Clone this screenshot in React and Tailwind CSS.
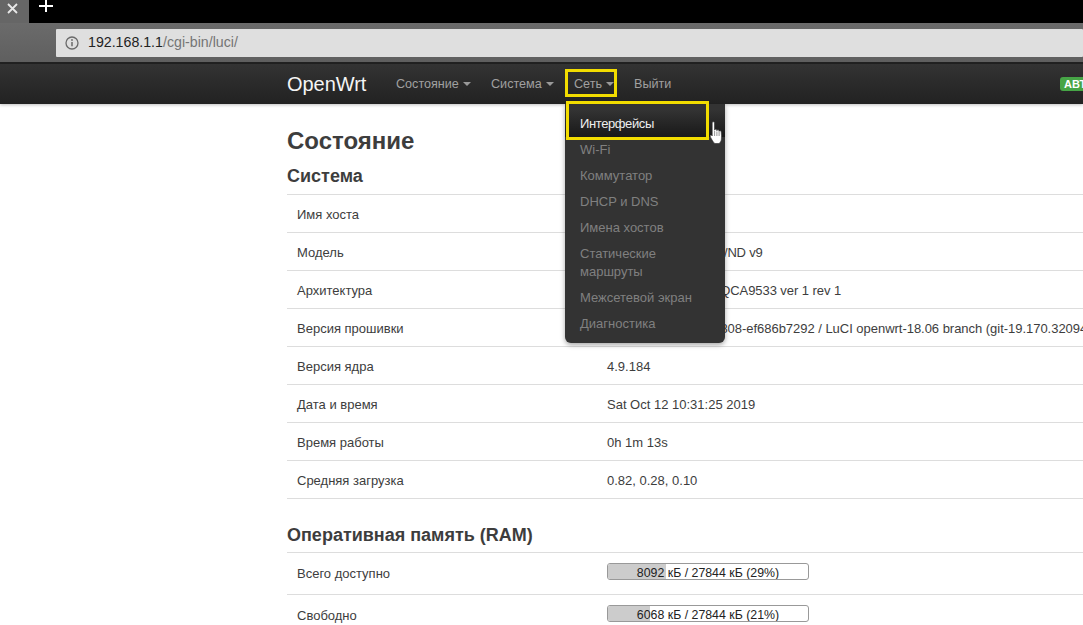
import React from 'react';

const rows = [
    ['Имя хоста', 'OpenWrt'],
    ['Модель', 'TP-Link TL-WR841N/ND v9', 'tracking-[-0.2px]'],
    ['Архитектура', 'Qualcomm Atheros QCA9533 ver 1 rev 1', 'tracking-[-0.06px]'],
    ['Версия прошивки', 'OpenWrt 18.06.4 r7808-ef686b7292 / LuCI openwrt-18.06 branch (git-19.170.32094-4d6d8bc)', 'tracking-[-0.03px]'],
    ['Версия ядра', '4.9.184'],
    ['Дата и время', 'Sat Oct 12 10:31:25 2019'],
    ['Время работы', '0h 1m 13s'],
    ['Средняя загрузка', '0.82, 0.28, 0.10'],
];

const memory = [
    ['Всего доступно', '8092 кБ / 27844 кБ (29%)', 29],
    ['Свободно', '6068 кБ / 27844 кБ (21%)', 21],
];

const menu = ['Wi-Fi', 'Коммутатор', 'DHCP и DNS', 'Имена хостов', 'Статические маршруты', 'Межсетевой экран', 'Диагностика'];

function Caret() {
    return <span className="ml-[4px] mt-[1px] h-0 w-0 border-x-[4px] border-t-[4px] border-x-transparent border-t-[#999]"></span>;
}

function NavItem({ label, caret, className = '' }) {
    return (
        <div className={`flex shrink-0 items-center text-[12.6px] text-[#a0a0a0] ${className}`}>
            {label}
            {caret && <Caret />}
        </div>
    );
}

function HandCursor() {
    return (
        <svg className="absolute left-[710px] top-[121px]" width="14" height="24" viewBox="0 0 14 24">
            <path
                d="M2.200 1.800c0-1.400 2.300-1.400 2.300 0v7.400c.2-1.300 2.200-1.300 2.300 0v.5c.2-1.200 2.100-1.100 2.200.1v.6c.3-1 2.100-.8 2.200.4.300 2.600.5 5.300.2 7.400-.3 2-1.100 3.500-2.300 4.300H4.800C3.600 21.600 2.500 19.800 1.500 18 .6 16.400-.1 15 .4 14.300c.5-.8 1.200-.3 1.800.7V1.800z"
                fill="#fff"
                stroke="#2a2a2a"
                strokeWidth="0.6"
            />
            <path d="M4.600 10v5M6.900 10.500v4.500M9.100 11v4" stroke="#666" strokeWidth="0.7" fill="none" />
        </svg>
    );
}

export default function App() {
    return (
        <div className="relative h-[625px] w-[1083px] overflow-hidden bg-white font-['Liberation_Sans',Arial,sans-serif] text-[#3d3d3d]">
            {/* Browser tabs */}
            <div className="flex h-[23px] items-start bg-black">
                <div className="flex h-[23px] w-[29px] items-start justify-center bg-[#666]">
                    <svg className="mt-[3px] ml-[-5px]" width="11" height="11" viewBox="0 0 11 11">
                        <path d="M1 1l9 9M10 1l-9 9" stroke="#e8e8e8" strokeWidth="1.8" />
                    </svg>
                </div>
                <svg className="ml-[10px]" width="14" height="12" viewBox="0 0 14 12">
                    <path d="M7 0v12M0 6h14" stroke="#fff" strokeWidth="2" />
                </svg>
            </div>

            {/* Address bar */}
            <div className="flex h-[41px] items-start border-b-2 border-[#222] bg-gradient-to-b from-[#6b6b6b] to-[#5f5f5f] pl-[56px] pt-[6px]">
                <div className="flex h-[28px] flex-1 items-center rounded-[1px] bg-[#dfdfdf] pl-[9px] text-[14.2px] text-[#757575]">
                    <svg width="14" height="14" viewBox="0 0 14 14" fill="none">
                        <circle cx="7" cy="7" r="6" stroke="#6a6a6a" strokeWidth="1.300" />
                        <path d="M7 6v4.200" stroke="#6a6a6a" strokeWidth="1.500" />
                        <circle cx="7" cy="4" r="0.900" fill="#6a6a6a" />
                    </svg>
                    <span className="ml-[9px] text-[#222]">192.168.1.1</span>
                    <span>/cgi-bin/luci/</span>
                </div>
            </div>

            {/* LuCI header */}
            <div className="flex h-[40px] items-center bg-gradient-to-b from-[#333] to-[#222] pl-[287px] shadow-[0_1px_3px_rgba(0,0,0,0.25)]">
                <div className="w-[109px] shrink-0 text-[20px] tracking-[-0.05px] text-[#f5f5f5]">OpenWrt</div>
                <NavItem label="Состояние" caret className="w-[95px]" />
                <NavItem label="Система" caret className="w-[83px]" />
                <NavItem label="Сеть" caret className="w-[60px]" />
                <NavItem label="Выйти" className="w-[426px]" />
                <div className="shrink-0 rounded-[3px] bg-[#46a546] px-[4px] text-[11px] leading-[14px] font-bold whitespace-nowrap text-white">АВТООБНОВЛЕНИЕ</div>
            </div>

            {/* Page content */}
            <div className="pl-[287px] pt-[21px]">
                <h1 className="text-[24px] leading-[32px] font-bold">Состояние</h1>
                <h2 className="mt-[6px] text-[18px] leading-[26px] font-bold">Система</h2>
                <div className="mt-[5px] border-t border-[#ddd]">
                    {rows.map(([label, value, spacing = '']) => (
                        <div key={label} className="flex h-[38px] items-center border-b border-[#ddd] pt-[2px] text-[13px]">
                            <div className="w-[320px] shrink-0 pl-[10px]">{label}</div>
                            <div className={`whitespace-nowrap ${spacing}`}>{value}</div>
                        </div>
                    ))}
                </div>

                <h2 className="mt-[23px] text-[18px] leading-[26px] font-bold">Оперативная память (RAM)</h2>
                <div className="mt-[4px] border-t border-[#ddd]">
                    {memory.map(([label, value, percent]) => (
                        <div key={label} className="flex h-[42px] items-center border-b border-[#ddd] text-[13px]">
                            <div className="w-[320px] shrink-0 pl-[10px]">{label}</div>
                            <div className="relative mb-[4px] h-[17px] w-[202px] overflow-hidden rounded-[3px] border border-[#999] text-center text-[12.350px] leading-[19px] text-[#222]">
                                <div className="absolute inset-y-0 left-0 bg-[#ccc]" style={{ width: `${percent}%` }}></div>
                                <span className="relative">{value}</span>
                            </div>
                        </div>
                    ))}
                </div>
            </div>

            {/* Dropdown menu */}
            <div className="absolute left-[565px] top-[104px] w-[160px] rounded-b-[6px] bg-[#333] pb-[6px] text-[13px] leading-[18px] text-[#808080] shadow-[0_2px_5px_rgba(0,0,0,0.35)]">
                <div className="mt-[6px] bg-gradient-to-b from-[#333] to-[#191919] px-[15px] py-[4px] pt-[5px] tracking-[-0.4px] text-[#eee]">Интерфейсы</div>
                {menu.map((item) => (
                    <div key={item} className="px-[15px] py-[4px]">{item}</div>
                ))}
            </div>

            {/* Yellow highlights added over the screenshot */}
            <div className="absolute left-[565px] top-[69px] h-[28px] w-[52px] border-[3px] border-[#f2dc00]"></div>
            <div className="absolute left-[566px] top-[101px] h-[39px] w-[143px] border-[3px] border-[#f2dc00]"></div>
            <HandCursor />
        </div>
    );
}
